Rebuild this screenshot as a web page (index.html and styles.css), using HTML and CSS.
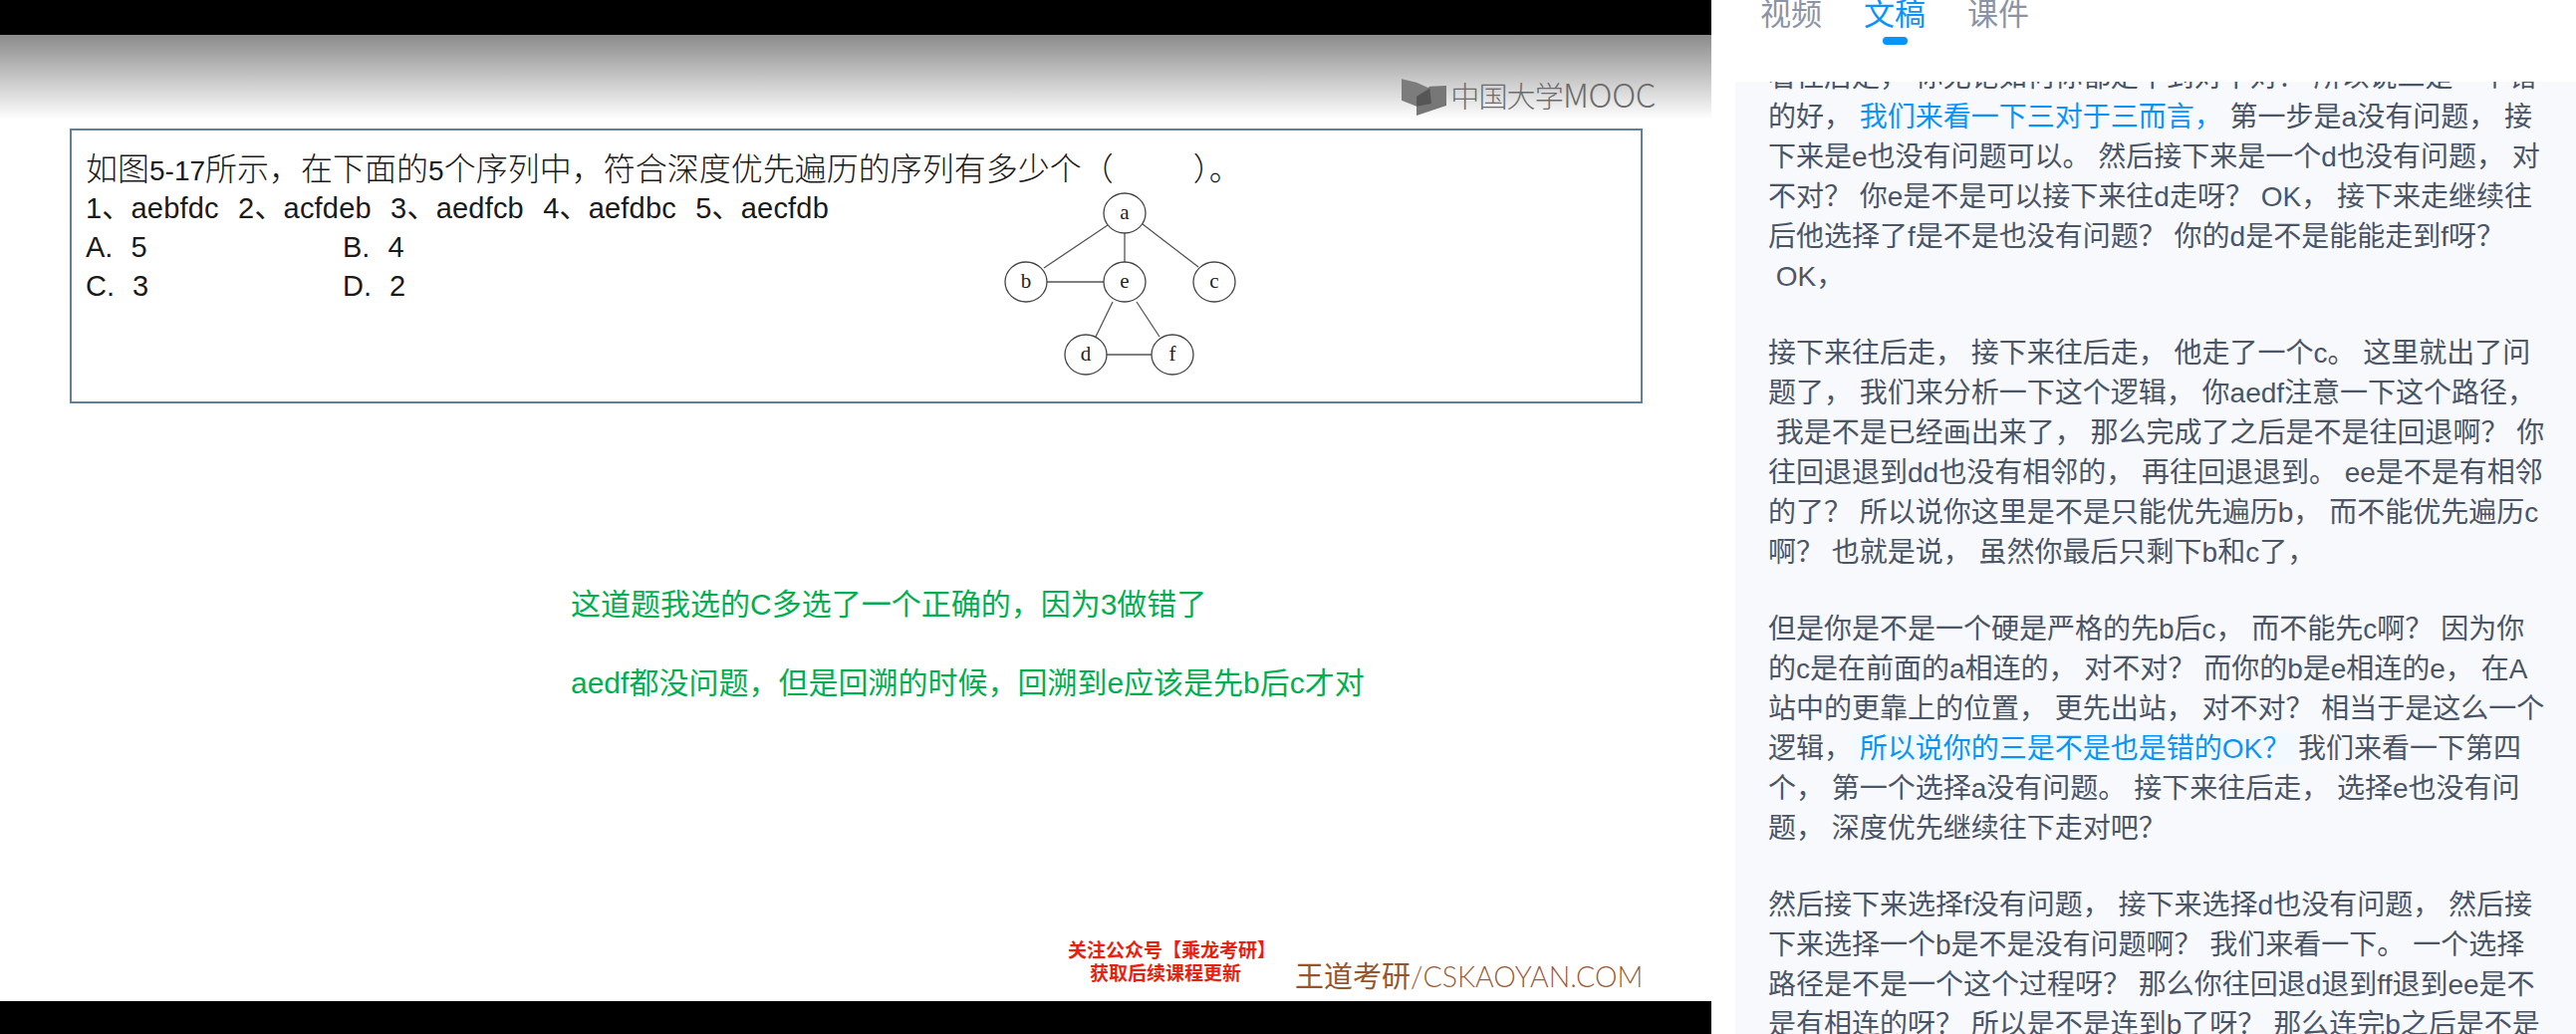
FILE: index.html

```html
<!DOCTYPE html>
<html lang="zh">
<head>
<meta charset="utf-8">
<title>文稿</title>
<link rel="stylesheet" href="styles.css">
</head>
<body>

<div class="video">
  <div class="blackbar top"></div>
  <div class="slide">
    <div class="slidehead">
      <div class="mooc">
        <svg class="moocicon" width="46" height="38" viewBox="0 0 138 114">
          <polygon points="0,4 45,14 85,32 45,56 45,86 0,68" fill="#7c7c7c"/>
          <polygon points="85,26 135,24 135,84 45,114 45,56" fill="#777777"/>
          <polygon points="45,56 85,32 90,78 45,86" fill="#565656"/>
        </svg>
        <span class="mooctext">中国大学<span class="moocen">MOOC</span></span>
      </div>
    </div>

    <div class="question">
      <div class="qline qtitle">如图<span class="latin">5-17</span>所示，在下面的<span class="latin">5</span>个序列中，符合深度优先遍历的序列有多少个（<span class="blank"></span>）。</div>
      <div class="qline qseq">1、aebfdc 2、acfdeb 3、aedfcb 4、aefdbc 5、aecfdb</div>
      <div class="qline qopts"><span class="opt">A. 5</span><span class="opt">B. 4</span></div>
      <div class="qline qopts"><span class="opt">C. 3</span><span class="opt">D. 2</span></div>

      <svg class="graph" width="240" height="190" viewBox="0 0 240 190">
        <g class="edges">
          <line x1="106" y1="36" x2="42" y2="79"/>
          <line x1="123" y1="44" x2="123" y2="73"/>
          <line x1="141" y1="35" x2="197" y2="78"/>
          <line x1="45" y1="93" x2="102" y2="93"/>
          <line x1="111" y1="113" x2="94" y2="148"/>
          <line x1="135" y1="113" x2="158" y2="148"/>
          <line x1="105" y1="166" x2="150" y2="166"/>
        </g>
        <g class="nodes">
          <ellipse cx="123" cy="24" rx="21" ry="20"/>
          <ellipse cx="24" cy="93" rx="21" ry="20"/>
          <ellipse cx="123" cy="93" rx="21" ry="20"/>
          <ellipse cx="213" cy="93" rx="21" ry="20"/>
          <ellipse cx="84" cy="166" rx="21" ry="20"/>
          <ellipse cx="171" cy="166" rx="21" ry="20"/>
        </g>
        <g class="labels">
          <text x="123" y="30">a</text>
          <text x="24" y="99">b</text>
          <text x="123" y="99">e</text>
          <text x="213" y="99">c</text>
          <text x="84" y="172">d</text>
          <text x="171" y="172">f</text>
        </g>
      </svg>
    </div>

    <div class="notes">
      <p>这道题我选的C多选了一个正确的，因为3做错了</p>
      <p>aedf都没问题，但是回溯的时候，回溯到e应该是先b后c才对</p>
    </div>

    <div class="slidefoot">
      <div class="follow">关注公众号【乘龙考研】<br>获取后续课程更新</div>
      <div class="brand"><span class="brandcn">王道考研</span>/CSKAOYAN.COM</div>
    </div>
  </div>
  <div class="blackbar bottom"></div>
</div>

<div class="side">
  <div class="tabs">
    <div class="tab">视频</div>
    <div class="tab active">文稿<div class="tabmark"></div></div>
    <div class="tab">课件</div>
  </div>
  <div class="panel">
    <div class="script">
<p>看往后走， 你无论如何你都走不到对不对？ 所以说二是一个错
的好， <span class="hl">我们来看一下三对于三而言，</span> 第一步是a没有问题， 接
下来是e也没有问题可以。 然后接下来是一个d也没有问题， 对
不对？ 你e是不是可以接下来往d走呀？ OK， 接下来走继续往
后他选择了f是不是也没有问题？ 你的d是不是能能走到f呀？
 OK，</p>
<p>接下来往后走， 接下来往后走， 他走了一个c。 这里就出了问
题了， 我们来分析一下这个逻辑， 你aedf注意一下这个路径，
 我是不是已经画出来了， 那么完成了之后是不是往回退啊？ 你
往回退退到dd也没有相邻的， 再往回退退到。 ee是不是有相邻
的了？ 所以说你这里是不是只能优先遍历b， 而不能优先遍历c
啊？ 也就是说， 虽然你最后只剩下b和c了，</p>
<p>但是你是不是一个硬是严格的先b后c， 而不能先c啊？ 因为你
的c是在前面的a相连的， 对不对？ 而你的b是e相连的e， 在A
站中的更靠上的位置， 更先出站， 对不对？ 相当于是这么一个
逻辑，<span class="hl current"> 所以说你的三是不是也是错的OK？ </span>我们来看一下第四
个， 第一个选择a没有问题。 接下来往后走， 选择e也没有问
题， 深度优先继续往下走对吧？</p>
<p>然后接下来选择f没有问题， 接下来选择d也没有问题， 然后接
下来选择一个b是不是没有问题啊？ 我们来看一下。 一个选择
路径是不是一个这个过程呀？ 那么你往回退d退到ff退到ee是不
是有相连的呀？ 所以是不是连到b了呀？ 那么连完b之后是不是</p>
    </div>
  </div>
</div>

</body>
</html>
```

FILE: styles.css

```css
html, body {
  margin: 0;
  height: 100%;
}
body {
  display: flex;
  width: 2586px;
  height: 1038px;
  overflow: hidden;
  background: #fff;
  font-family: "Liberation Sans", "Noto Sans CJK SC", sans-serif;
}

/* left: the video frame */
.video {
  width: 1718px;
  flex: none;
  display: flex;
  flex-direction: column;
}
.blackbar {
  background: #000;
  flex: none;
}
.blackbar.top { height: 35px; }
.blackbar.bottom { height: 33px; }
.slide {
  flex: 1;
  display: flex;
  flex-direction: column;
  background: #fff;
}
.slidehead {
  height: 85px;
  flex: none;
  background: linear-gradient(#8b8b8b, #fff);
  display: flex;
  justify-content: flex-end;
  align-items: flex-start;
  padding-right: 56px;
}
.mooc {
  display: flex;
  align-items: center;
  margin-top: 41px;
  gap: 3px;
}
.moocicon { display: block; }
.mooctext {
  font-family: "Noto Sans CJK SC", sans-serif;
  font-weight: 300;
  font-size: 29px;
  letter-spacing: -0.8px;
  line-height: 36px;
  color: #6c6c6c;
  white-space: nowrap;
  padding-bottom: 4px;
}
.moocen {
  font-size: 33px;
  letter-spacing: -0.4px;
}

.question {
  position: relative;
  box-sizing: border-box;
  width: 1579px;
  height: 276px;
  margin: 9px 0 0 70px;
  padding: 20px 0 0 14px;
  border: 2px solid #5f8099;
  color: #1a1a1a;
}
.qline {
  height: 39px;
  line-height: 39px;
  white-space: nowrap;
}
.qtitle {
  font-family: "Noto Sans CJK SC", sans-serif;
  font-weight: 300;
  font-size: 32px;
  line-height: 32px;
}
.qtitle .latin {
  font-family: "Liberation Sans", sans-serif;
  font-size: 28px;
}
.blank {
  display: inline-block;
  width: 80px;
}
.qseq, .qopts {
  font-family: "Liberation Sans", "Noto Sans CJK SC", sans-serif;
  font-size: 29px;
}
.qseq {
  word-spacing: 11px;
  letter-spacing: 0.2px;
}
.opt {
  display: inline-block;
  width: 258px;
  word-spacing: 10px;
}
.graph {
  position: absolute;
  left: 934px;
  top: 59px;
}
.edges line {
  stroke: #555;
  stroke-width: 1.3;
}
.nodes ellipse {
  fill: #fff;
  stroke: #444;
  stroke-width: 1.3;
}
.labels text {
  font-family: "Liberation Serif", serif;
  font-size: 21px;
  fill: #222;
  text-anchor: middle;
}

.notes {
  margin: 182px 0 0 573px;
  color: #00b050;
  font-size: 30px;
  line-height: 40px;
}
.notes p {
  margin: 0 0 39px;
  white-space: nowrap;
}

.slidefoot {
  margin-top: auto;
  display: flex;
  align-items: flex-end;
  padding: 0 0 7px 1072px;
}
.follow {
  width: 196px;
  font-family: "Noto Sans CJK SC", sans-serif;
  font-weight: 700;
  font-size: 19px;
  line-height: 23px;
  color: #e8210f;
  text-align: center;
  white-space: nowrap;
  padding-bottom: 11px;
}
.brand {
  margin-left: 32px;
  font-family: Lato, "Liberation Sans", sans-serif;
  font-weight: 300;
  font-size: 28.5px;
  line-height: 36px;
  color: #9a5d3a;
  white-space: nowrap;
}
.brandcn {
  font-family: "Noto Sans CJK SC", sans-serif;
  font-weight: 400;
  font-size: 29px;
  color: #99542a;
}

/* right: tabs and transcript */
.side {
  flex: 1;
  margin-left: 24px;
  min-width: 0;
  display: flex;
  flex-direction: column;
}
.tabs {
  height: 82px;
  flex: none;
  display: flex;
  gap: 42px;
  padding-left: 25px;
  font-size: 31px;
  font-family: "Noto Sans CJK SC", sans-serif;
}
.tab {
  margin-top: -8px;
  line-height: 40px;
  color: #8a94a6;
}
.tab.active { color: #0a94f7; }
.tabmark {
  width: 25px;
  height: 8px;
  margin: 5px auto 0;
  border-radius: 4px;
  background: #0a94f7;
}
.panel {
  flex: 1;
  overflow: hidden;
  background: #f7f9fd;
  padding-left: 33px;
}
.script {
  margin-top: -24px;
  font-size: 28px;
  line-height: 40px;
  color: #4a5568;
}
.script p {
  margin: 0 0 37px;
  white-space: pre;
}
.hl { color: #0a94f7; }
.hl.current { background: #f2faff; }
```
